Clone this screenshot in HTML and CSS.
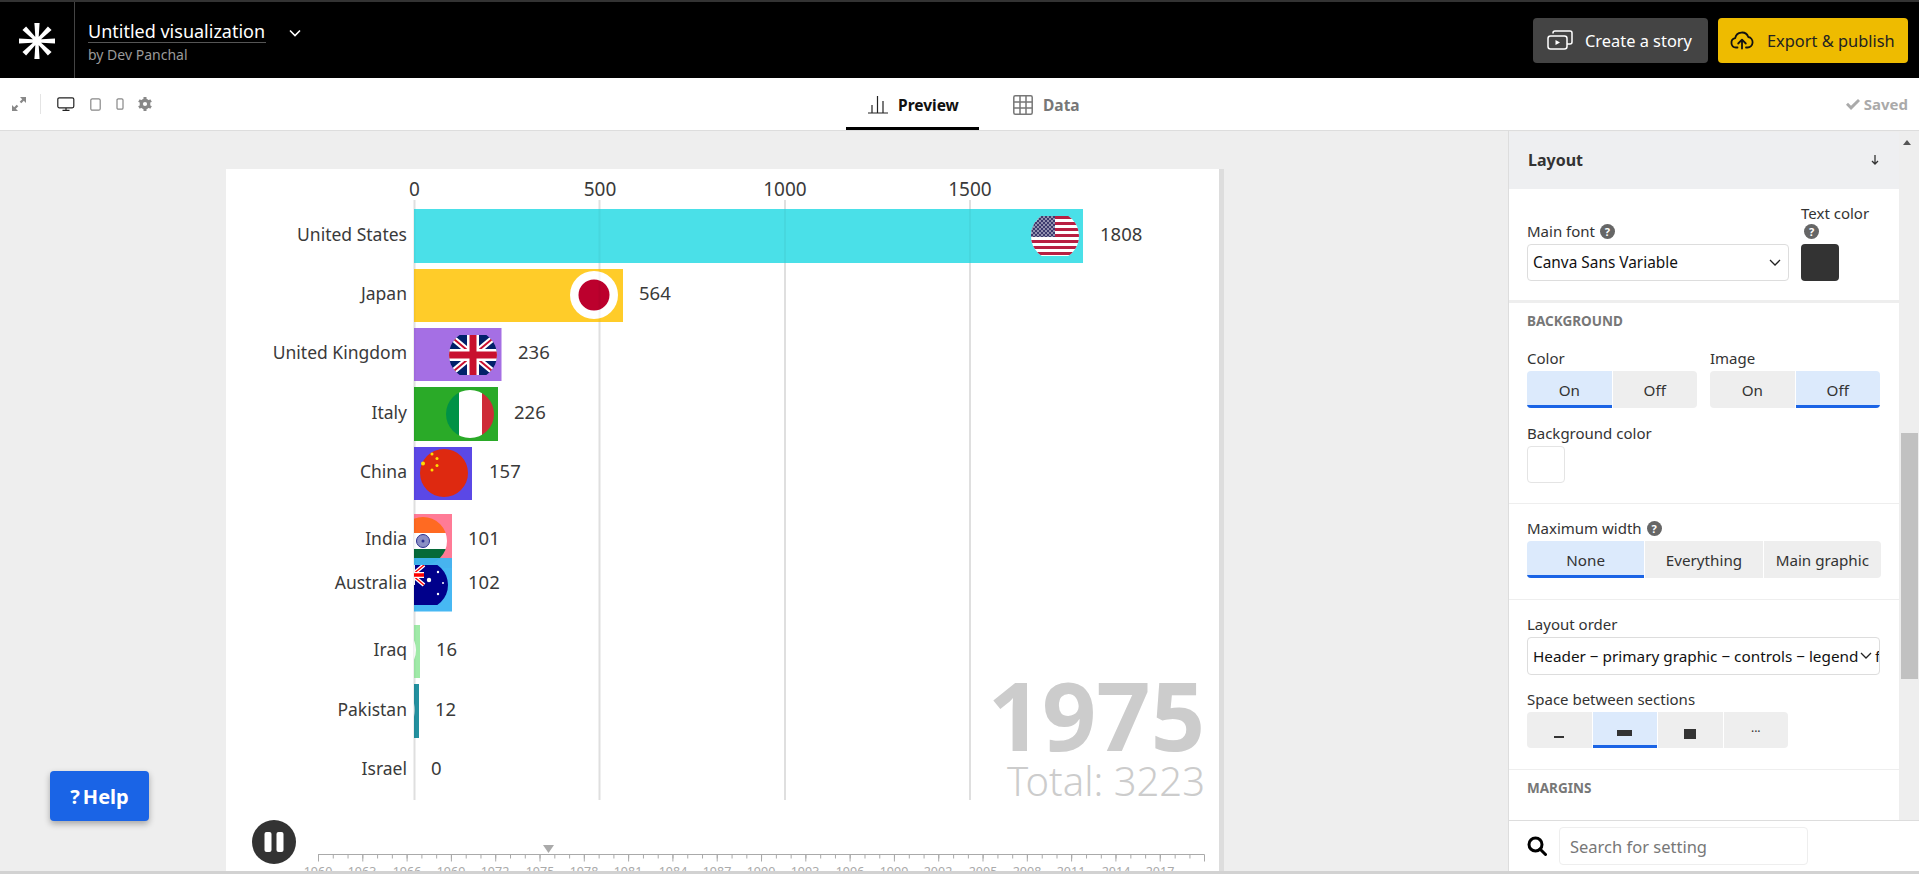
FILE: index.html
```html
<!DOCTYPE html>
<html lang="en">
<head>
<meta charset="utf-8">
<title>Untitled visualization</title>
<link rel="stylesheet" href="styles.css">
</head>
<body>
<div class="app">
  <header class="topbar">
    <div class="logo-cell">
      <svg width="40" height="40" viewBox="-20 -20 40 40" fill="#fff">
        <g id="spokes">
          <circle r="4.500"/>
          <path id="sp" d="M-1.400 0L-2.600-18H2.600L1.400 0Z"/>
          <use href="#sp" transform="rotate(45)"/><use href="#sp" transform="rotate(90)"/><use href="#sp" transform="rotate(135)"/>
          <use href="#sp" transform="rotate(180)"/><use href="#sp" transform="rotate(225)"/><use href="#sp" transform="rotate(270)"/><use href="#sp" transform="rotate(315)"/>
        </g>
      </svg>
    </div>
    <div class="title-block">
      <div class="title">Untitled visualization</div>
      <div class="byline">by Dev Panchal</div>
    </div>
    <svg class="title-chev" width="12" height="8" viewBox="0 0 12 8" fill="none" stroke="#fff" stroke-width="1.6"><path d="M1 1.5l5 5 5-5"/></svg>
    <div class="top-actions">
      <button class="btn btn-story">
        <svg width="26" height="20" viewBox="0 0 26 20" fill="none" stroke="#fff" stroke-width="1.5" stroke-linejoin="round"><rect x="1" y="6" width="19" height="13" rx="2.5"/><path d="M6 3.5V3a2 2 0 0 1 2-2h15a2 2 0 0 1 2 2v9a2 2 0 0 1-2 2h-3"/><path d="M8.5 10v5l4.5-2.500z" fill="#fff" stroke="none"/></svg>
        <span>Create a story</span>
      </button>
      <button class="btn btn-export">
        <svg width="24" height="20" viewBox="0 0 24 20" fill="none" stroke="#111" stroke-width="1.8" stroke-linecap="round" stroke-linejoin="round"><path d="M7.500 17.500H6a4.700 4.700 0 0 1-.8-9.300A6.800 6.800 0 0 1 18.300 7a5.300 5.300 0 0 1-.8 10.500H16"/><path d="M12 18.500V10M8.200 13.500L12 9.700l3.800 3.800"/></svg>
        <span>Export &amp; publish</span>
      </button>
    </div>
  </header>

  <nav class="toolbar">
    <div class="tool-left">
      <svg class="ic-expand" width="14" height="14" viewBox="0 0 14 14" fill="#888"><path d="M8 0h6v6l-2.200-2.200-2.500 2.500-1.600-1.600 2.500-2.500zM0 14V8l2.200 2.200 2.500-2.500 1.600 1.600-2.500 2.500L6 14z"/></svg>
      <span class="tool-sep"></span>
      <svg class="ic-monitor" width="18" height="14" viewBox="0 0 18 14" fill="none" stroke="#222" stroke-width="1.200"><rect x=".8" y=".8" width="16" height="10" rx="1.500"/><path d="M9 11v2M5.500 13.300h7"/></svg>
      <svg class="ic-tablet" width="11" height="13" viewBox="0 0 11 13" fill="none" stroke="#888" stroke-width="1.200"><rect x=".8" y=".8" width="9.400" height="11.400" rx="1.500"/></svg>
      <svg class="ic-phone" width="8" height="12" viewBox="0 0 8 12" fill="none" stroke="#888" stroke-width="1.200"><rect x="1" y=".8" width="6" height="10.400" rx="1.300"/></svg>
      <svg class="ic-gear" width="14" height="14" viewBox="-7 -7 14 14" fill="#888"><circle r="5.400"/><g id="teeth"><rect id="t" x="-1.500" y="-7" width="3" height="3"/><use href="#t" transform="rotate(60)"/><use href="#t" transform="rotate(120)"/><use href="#t" transform="rotate(180)"/><use href="#t" transform="rotate(240)"/><use href="#t" transform="rotate(300)"/></g><circle r="2.100" fill="#fff"/></svg>
    </div>
    <a class="tab tab-active">
      <svg width="20" height="19" viewBox="0 0 20 19" fill="none" stroke="#222" stroke-width="1.200"><path d="M0 18h20M4 18V10M9.500 18V1M15 18V6"/></svg>
      <span>Preview</span>
    </a>
    <a class="tab tab-data">
      <svg width="20" height="20" viewBox="0 0 20 20" fill="none" stroke="#777" stroke-width="1.500"><rect x=".8" y=".8" width="18.400" height="18.400" rx="1.500"/><path d="M7 1v18M13 1v18M1 7h18M1 13h18"/></svg>
      <span>Data</span>
    </a>
    <div class="saved">
      <svg width="14" height="11" viewBox="0 0 14 11" fill="#aaa"><path d="M0 5.700l2-2 3 3L12 0l2 2-9 9z"/></svg>
      <span>Saved</span>
    </div>
  </nav>

  <main class="workspace">
    <section class="stage">
      <div class="card">
        <svg class="chart" width="993" height="702" viewBox="226 169 993 702">
          <defs>
            <clipPath id="plot"><rect x="414" y="169" width="800" height="702"/></clipPath>
            <clipPath id="round"><circle r="24"/></clipPath>
            <clipPath id="band"><rect x="-24" y="-20" width="48" height="40" rx="6"/></clipPath>
            <pattern id="stars" width="4" height="4" patternUnits="userSpaceOnUse"><rect width="4" height="4" fill="#3c3b6e"/><circle cx="1" cy="1" r=".8" fill="#fff"/><circle cx="3" cy="3" r=".8" fill="#fff"/></pattern>
          </defs>

          <g class="axis-labels">
            <text x="414.500" y="196">0</text>
            <text x="600" y="196">500</text>
            <text x="785" y="196">1000</text>
            <text x="970" y="196">1500</text>
          </g>

          <g class="grid-under">
            <line x1="414.500" y1="200" x2="414.500" y2="800"/>
            <line x1="599.500" y1="200" x2="599.500" y2="800"/>
            <line x1="785" y1="200" x2="785" y2="800"/>
            <line x1="970" y1="200" x2="970" y2="800"/>
          </g>

          <g clip-path="url(#plot)">
            <rect x="414" y="209" width="669" height="54" fill="#4ae0e8"/>
            <rect x="414" y="269" width="209" height="53" fill="#ffcc29"/>
            <rect x="414" y="328" width="87.500" height="53" fill="#a56fe4"/>
            <rect x="414" y="387" width="84" height="54" fill="#2aaa28"/>
            <rect x="414" y="447" width="58" height="53" fill="#5b48e6"/>
            <rect x="414" y="514" width="38" height="54" fill="#ff7b96"/>

            <!-- United States -->
            <g transform="translate(1055 236)"><g clip-path="url(#round)"><g clip-path="url(#band)">
              <rect x="-24" y="-21" width="48" height="42" fill="#fff"/>
              <path d="M-24-18.500H24M-24-12.500H24M-24-6.500H24M-24-.5H24M-24 5.500H24M-24 11.500H24M-24 17.500H24" stroke="#b81f42" stroke-width="3"/>
              <rect x="-24" y="-21" width="24" height="22" fill="url(#stars)"/>
            </g></g></g>

            <!-- Japan -->
            <g transform="translate(594 295)"><circle r="24" fill="#fff"/><circle r="15.500" fill="#bc002d"/></g>

            <!-- United Kingdom -->
            <g transform="translate(473 355)"><g clip-path="url(#round)"><g clip-path="url(#band)">
              <rect x="-24" y="-20" width="48" height="40" fill="#012169"/>
              <path d="M-24-20L24 20M24-20L-24 20" stroke="#fff" stroke-width="6"/>
              <path d="M-24-20L24 20M24-20L-24 20" stroke="#c8102e" stroke-width="2"/>
              <path d="M0-20V20M-24 0H24" stroke="#fff" stroke-width="12"/>
              <path d="M0-20V20M-24 0H24" stroke="#c8102e" stroke-width="7"/>
            </g></g></g>

            <!-- Italy -->
            <g transform="translate(470 414)"><g clip-path="url(#round)">
              <rect x="-24" y="-24" width="13" height="48" fill="#009246"/>
              <rect x="-11" y="-24" width="23" height="48" fill="#fff"/>
              <rect x="12" y="-24" width="12" height="48" fill="#ce2b37"/>
            </g></g>

            <!-- China -->
            <g transform="translate(444 473)"><circle r="24" fill="#de2910"/>
              <g fill="#ffde00"><circle cx="-12" cy="-19" r="1.500"/><circle cx="-7" cy="-14.500" r="1.500"/><circle cx="-7" cy="-7.500" r="1.500"/><circle cx="-12" cy="-3" r="1.500"/><circle cx="-21" cy="-9.500" r="2"/></g>
            </g>

            <!-- India -->
            <g transform="translate(423 541)"><g clip-path="url(#round)">
              <rect x="-24" y="-24" width="48" height="16" fill="#ff6a22"/>
              <rect x="-24" y="-8" width="48" height="16" fill="#fff"/>
              <rect x="-24" y="8" width="48" height="16" fill="#066a39"/>
              <circle cx="0" cy="0" r="6.500" fill="#8a8fc4" stroke="#2a2f8f" stroke-width="1"/>
              <circle cx="0" cy="0" r="1.500" fill="#2a2f8f"/>
            </g></g>

            <rect x="414" y="558" width="38" height="53.500" fill="#3fb5f2" fill-opacity=".96"/>

            <!-- Australia -->
            <g transform="translate(424 585)"><g clip-path="url(#round)"><g clip-path="url(#band)">
              <rect x="-24" y="-20" width="48" height="40" fill="#00008b"/>
              <g transform="translate(-24 -20)">
                <path d="M0 0L24 20M24 0L0 20" stroke="#fff" stroke-width="4"/>
                <path d="M0 0L24 20M24 0L0 20" stroke="#f00" stroke-width="1.300"/>
                <path d="M12 0V20M0 10H24" stroke="#fff" stroke-width="6"/>
                <path d="M12 0V20M0 10H24" stroke="#f00" stroke-width="3.500"/>
              </g>
              <g fill="#fff"><circle cx="5" cy="-5" r="2.200"/><circle cx="14" cy="-13" r="1.200"/><circle cx="14" cy="9" r="1.200"/><circle cx="19" cy="-2" r="1"/></g>
            </g></g></g>

            <rect x="414" y="625" width="6" height="53" fill="#a0eaa8"/>
            <g transform="translate(392 650)"><circle r="24" fill="#fff"/></g>
            <rect x="414" y="684" width="5" height="54" fill="#23909f"/>
            <g transform="translate(391 710)"><circle r="24" fill="#9fc8cf"/></g>
          </g>

          <g class="grid">
            <line x1="414.500" y1="200" x2="414.500" y2="800"/>
            <line x1="599.500" y1="200" x2="599.500" y2="800"/>
            <line x1="785" y1="200" x2="785" y2="800"/>
            <line x1="970" y1="200" x2="970" y2="800"/>
          </g>

          <g class="names">
            <text x="407" y="241">United States</text>
            <text x="407" y="300">Japan</text>
            <text x="407" y="359">United Kingdom</text>
            <text x="407" y="419">Italy</text>
            <text x="407" y="478">China</text>
            <text x="407" y="545">India</text>
            <text x="407" y="589">Australia</text>
            <text x="407" y="656">Iraq</text>
            <text x="407" y="716">Pakistan</text>
            <text x="407" y="775">Israel</text>
          </g>

          <g class="values">
            <text x="1100" y="241">1808</text>
            <text x="639" y="300">564</text>
            <text x="518" y="359">236</text>
            <text x="514" y="419">226</text>
            <text x="489" y="478">157</text>
            <text x="468" y="545">101</text>
            <text x="468" y="589">102</text>
            <text x="436" y="656">16</text>
            <text x="435" y="716">12</text>
            <text x="431" y="775">0</text>
          </g>

          <text class="year" x="1205" y="751">1975</text>
          <text class="total" x="1205" y="796">Total: 3223</text>

          <circle cx="274" cy="842" r="22" fill="#333"/>
          <rect x="264.500" y="832" width="7" height="20" rx="2" fill="#fff"/>
          <rect x="276.500" y="832" width="7" height="20" rx="2" fill="#fff"/>

          <path d="M543 845h11l-5.500 8z" fill="#aaa"/>
          <g class="ticks">
            <line class="tick-base" x1="318" y1="854.500" x2="1204" y2="854.500"/>
            <line class="tick-minor" x1="318" y1="856.500" x2="1205" y2="856.500"/>
            <line class="tick-major" x1="318" y1="858" x2="1205" y2="858"/>
          </g>
          <g class="year-labels">
            <text x="318" y="876">1960</text><text x="362" y="876">1963</text><text x="407" y="876">1966</text><text x="451" y="876">1969</text>
            <text x="495" y="876">1972</text><text x="540" y="876">1975</text><text x="584" y="876">1978</text><text x="628" y="876">1981</text>
            <text x="673" y="876">1984</text><text x="717" y="876">1987</text><text x="761" y="876">1990</text><text x="805" y="876">1993</text>
            <text x="850" y="876">1996</text><text x="894" y="876">1999</text><text x="938" y="876">2002</text><text x="983" y="876">2005</text>
            <text x="1027" y="876">2008</text><text x="1071" y="876">2011</text><text x="1116" y="876">2014</text><text x="1160" y="876">2017</text>
          </g>
        </svg>
      </div>
      <button class="help"><span class="help-q">?</span>Help</button>
    </section>

    <aside class="side">
      <div class="side-top">
        <div class="panel">
          <div class="panel-head"><span>Layout</span>
            <svg width="8" height="10" viewBox="0 0 8 10" fill="none" stroke="#333" stroke-width="1.300"><path d="M4 0v9M1 6l3 3 3-3"/></svg>
          </div>

          <div class="sec sec-font">
            <div class="font-col">
              <div class="lbl">Main font <i class="q">?</i></div>
              <div class="select select-font"><span>Canva Sans Variable</span><svg class="sel-chev" width="16" height="8" viewBox="-2 0 16 8" fill="none" stroke="#222" stroke-width="1.300"><path d="M1 1l5 5 5-5"/></svg></div>
            </div>
            <div class="color-col">
              <div class="lbl">Text color</div>
              <div class="lbl"><i class="q q-solo">?</i></div>
              <div class="swatch swatch-dark"></div>
            </div>
          </div>

          <div class="sec sec-bg">
            <div class="sec-title">BACKGROUND</div>
            <div class="pair">
              <div class="pair-col">
                <div class="lbl">Color</div>
                <div class="toggle"><span class="on">On</span><span>Off</span></div>
              </div>
              <div class="pair-col">
                <div class="lbl">Image</div>
                <div class="toggle"><span>On</span><span class="on">Off</span></div>
              </div>
            </div>
            <div class="lbl lbl-gap">Background color</div>
            <div class="swatch swatch-white"></div>
          </div>

          <div class="sec sec-width">
            <div class="lbl">Maximum width <i class="q">?</i></div>
            <div class="toggle"><span class="on">None</span><span>Everything</span><span>Main graphic</span></div>
          </div>

          <div class="sec sec-order">
            <div class="lbl">Layout order</div>
            <div class="select select-order"><span>Header − primary graphic − controls − legend − footer</span><svg class="sel-chev" width="16" height="8" viewBox="-2 0 16 8" fill="none" stroke="#222" stroke-width="1.300"><path d="M1 1l5 5 5-5"/></svg></div>
            <div class="lbl lbl-gap2">Space between sections</div>
            <div class="toggle toggle-space">
              <span><b class="sp sp1"></b></span>
              <span class="on"><b class="sp sp2"></b></span>
              <span><b class="sp sp3"></b></span>
              <span class="dots">...</span>
            </div>
          </div>

          <div class="sec sec-margins">
            <div class="sec-title">MARGINS</div>
          </div>
        </div>
        <div class="scrollbar">
          <span class="scroll-up"></span>
          <span class="scroll-thumb"></span>
        </div>
      </div>
      <div class="search">
        <svg width="20" height="20" viewBox="0 0 20 20" fill="none" stroke="#000" stroke-width="3"><circle cx="8.500" cy="8.500" r="6.500"/><path d="M13 13l5.500 5.500" stroke-linecap="round"/></svg>
        <div class="search-input">Search for setting</div>
      </div>
    </aside>
  </main>
</div>
</body>
</html>
```

FILE: styles.css
```css
* { box-sizing: border-box; }
html, body { margin: 0; height: 100%; overflow: hidden; }
body { font-family: "Noto Sans", "Open Sans", sans-serif; color: #333; background: #eee; }
.app { height: 874px; display: flex; flex-direction: column; border-bottom: 3px solid #d2d2d2; }

/* top bar */
.topbar { height: 78px; flex: none; background: #000; border-top: 2px solid #333; display: flex; align-items: center; color: #fff; }
.logo-cell { width: 75px; height: 76px; border-right: 1px solid #444; display: flex; align-items: center; justify-content: center; padding-top: 2px; }
.title-block { margin-left: 13px; padding-top: 3px; }
.title { font-size: 18px; line-height: 21px; border-bottom: 1px solid #555; width: 178px; white-space: nowrap; }
.byline { font-size: 14px; line-height: 17px; margin-top: 3px; color: #9a9a9a; }
.title-chev { margin-left: 23px; margin-top: -15px; }
.top-actions { margin-left: auto; padding-right: 11px; display: flex; gap: 10px; }
.btn { height: 45px; border: 0; border-radius: 4px; display: flex; align-items: center; font: inherit; font-size: 16.400px; padding: 0; }
.btn-story { width: 175px; background: #444; color: #fff; padding-left: 14px; gap: 12px; }
.btn-export { width: 190px; background: #eebb00; color: #222; padding-left: 12px; gap: 13px; }

/* tool bar */
.toolbar { height: 53px; flex: none; background: #fff; border-bottom: 1px solid #ddd; display: flex; align-items: center; }
.tool-left { width: 846px; display: flex; align-items: center; padding-left: 12px; }
.ic-expand { margin-right: 14px; }
.tool-sep { width: 1px; height: 20px; background: #e4e4e4; margin-right: 16px; }
.ic-monitor { margin-right: 15px; }
.ic-tablet { margin-right: 15px; }
.ic-phone { margin-right: 14px; }
.tab { height: 52px; display: flex; align-items: center; gap: 10px; font-size: 15.500px; font-weight: 700; padding-top: 2px; }
.tab-active { width: 133px; padding-left: 22px; color: #111; border-bottom: 3px solid #000; padding-top: 4px; }
.tab-data { margin-left: 34px; color: #777; }
.saved { margin-left: auto; padding-right: 11px; display: flex; align-items: center; gap: 4px; font-size: 15px; font-weight: 700; color: #aaa; }

/* work area */
.workspace { flex: 1; min-height: 0; display: flex; }
.stage { width: 1509px; flex: none; position: relative; background: #eee; padding: 38px 0 0 226px; border-right: 1px solid #ddd; overflow: hidden; }
.card { width: 993px; height: 702px; background: #fff; box-shadow: 5px 0 0 #ddd; }
.chart { display: block; font-family: "Noto Sans", "Open Sans", sans-serif; }
.axis-labels text { font-size: 19px; fill: #3a3a3a; text-anchor: middle; }
.names text { font-size: 17.500px; fill: #3a3a3a; text-anchor: end; }
.values text { font-size: 18.500px; fill: #3a3a3a; }
.grid-under line { stroke: #e9e9e9; stroke-width: 2; }
.grid line { stroke: #000; stroke-opacity: .04; stroke-width: 2; }
.year { font-size: 95px; font-weight: 700; fill: #ccc; text-anchor: end; }
.total { font-size: 40px; font-weight: 300; fill: #ccc; text-anchor: end; }
.ticks line { stroke: #aaa; fill: none; }
.tick-base { stroke-width: 1; }
.tick-minor { stroke-width: 4; stroke-dasharray: 1 13.770; }
.tick-major { stroke-width: 7; stroke-dasharray: 1 43.300; }
.year-labels text { font-size: 12.500px; fill: #aaa; text-anchor: middle; }
.help { position: absolute; left: 50px; top: 640px; width: 99px; height: 50px; border: 0; border-radius: 4px; background: #1a64e6; color: #fff; font: inherit; font-size: 20px; font-weight: 700; box-shadow: 0 3px 6px rgba(0,0,0,.3); padding: 0; }
.help-q { margin-right: 3px; }

/* settings side */
.side { width: 410px; flex: none; display: flex; flex-direction: column; background: #fff; min-height: 0; }
.side-top { flex: 1; min-height: 0; display: flex; background: #eee; overflow: hidden; }
.panel { width: 390px; flex: none; background: #fff; margin-top: 1px; overflow: hidden; }
.panel-head { height: 57px; background: #eeeff1; display: flex; align-items: center; justify-content: space-between; padding: 0 20px 2px 19px; font-size: 16px; font-weight: 700; color: #333; }
.sec { padding-left: 18px; padding-right: 18px; border-bottom: 1px solid #eee; }
.lbl { font-size: 15px; line-height: 18px; color: #333; white-space: nowrap; }
.q { display: inline-block; width: 15px; height: 15px; border-radius: 50%; background: #666; color: #fff; font-size: 11px; line-height: 15px; font-weight: 700; font-style: normal; text-align: center; vertical-align: 1px; margin-left: 1px; }
.q-solo { margin-left: 3px; }
.sec-font { display: flex; align-items: flex-end; gap: 12px; padding-top: 16px; padding-bottom: 19px; height: 114px; border-bottom: 3px solid #eee; }
.font-col { width: 262px; }
.color-col { width: 60px; }
.select { height: 37px; margin-top: 4px; border: 1px solid #ddd; border-radius: 4px; background: #fff; display: flex; align-items: center; padding-left: 5px; font-size: 15.300px; color: #111; position: relative; overflow: hidden; white-space: nowrap; }
.select-font { font-size: 15.400px; }
.sel-chev { position: absolute; right: 5px; top: 14px; background: #fff; }
.swatch { width: 38px; height: 37px; border-radius: 4px; }
.swatch-dark { margin-top: 4px; background: #333; }
.swatch-white { margin-top: 4px; background: #fff; border: 1px solid #e4e4e4; }
.sec-title { font-size: 13.500px; line-height: 16px; font-weight: 700; color: #777; }
.sec-bg { padding-top: 10px; padding-bottom: 20px; height: 201px; }
.pair { display: flex; gap: 13px; margin-top: 20px; }
.pair-col { width: 170px; }
.lbl-gap { margin-top: 16px; }
.toggle { display: flex; gap: 1px; margin-top: 4px; height: 37px; border-radius: 4px; overflow: hidden; font-size: 15.200px; color: #333; }
.toggle span { flex: 1 1 0; display: flex; align-items: center; justify-content: center; background: #eee; white-space: nowrap; }
.toggle .on { background: #dceafc; border-bottom: 3px solid #1a64e6; padding-top: 3px; }
.sec-width { padding-top: 15px; height: 96px; }
.sec-order { padding-top: 15px; height: 170px; }
.select-order { height: 38px; margin-top: 4px; width: 353px; }
.lbl-gap2 { margin-top: 15px; }
.toggle-space { width: 261px; height: 36px; }
.sp { display: block; background: #333; }
.sp1 { width: 10px; height: 2px; margin-top: 13px; }
.sp2 { width: 15px; height: 6px; margin-top: 6px; }
.sp3 { width: 12px; height: 10px; margin-top: 7px; }
.toggle-space .dots { align-items: flex-start; padding-top: 9px; font-size: 12px; line-height: 14px; }
.sec-margins { padding-top: 10px; border-bottom: 0; }
.scrollbar { width: 20px; flex: none; background: #eee; position: relative; padding-left: 2px; display: flex; flex-direction: column; }
.scroll-up { width: 0; height: 0; margin: 9px 0 0 2px; border: 4.500px solid transparent; border-top: 0; border-bottom: 5px solid #555; }
.scroll-thumb { width: 17px; height: 246px; margin-top: 288px; background: #c1c1c1; }
.search { height: 51px; flex: none; background: #fff; border-top: 1px solid #ddd; display: flex; align-items: center; padding-left: 18px; gap: 12px; }
.search-input { width: 249px; height: 38px; border: 1px solid #eee; border-radius: 4px; display: flex; align-items: center; padding-left: 10px; font-size: 16.500px; color: #777; }
```
